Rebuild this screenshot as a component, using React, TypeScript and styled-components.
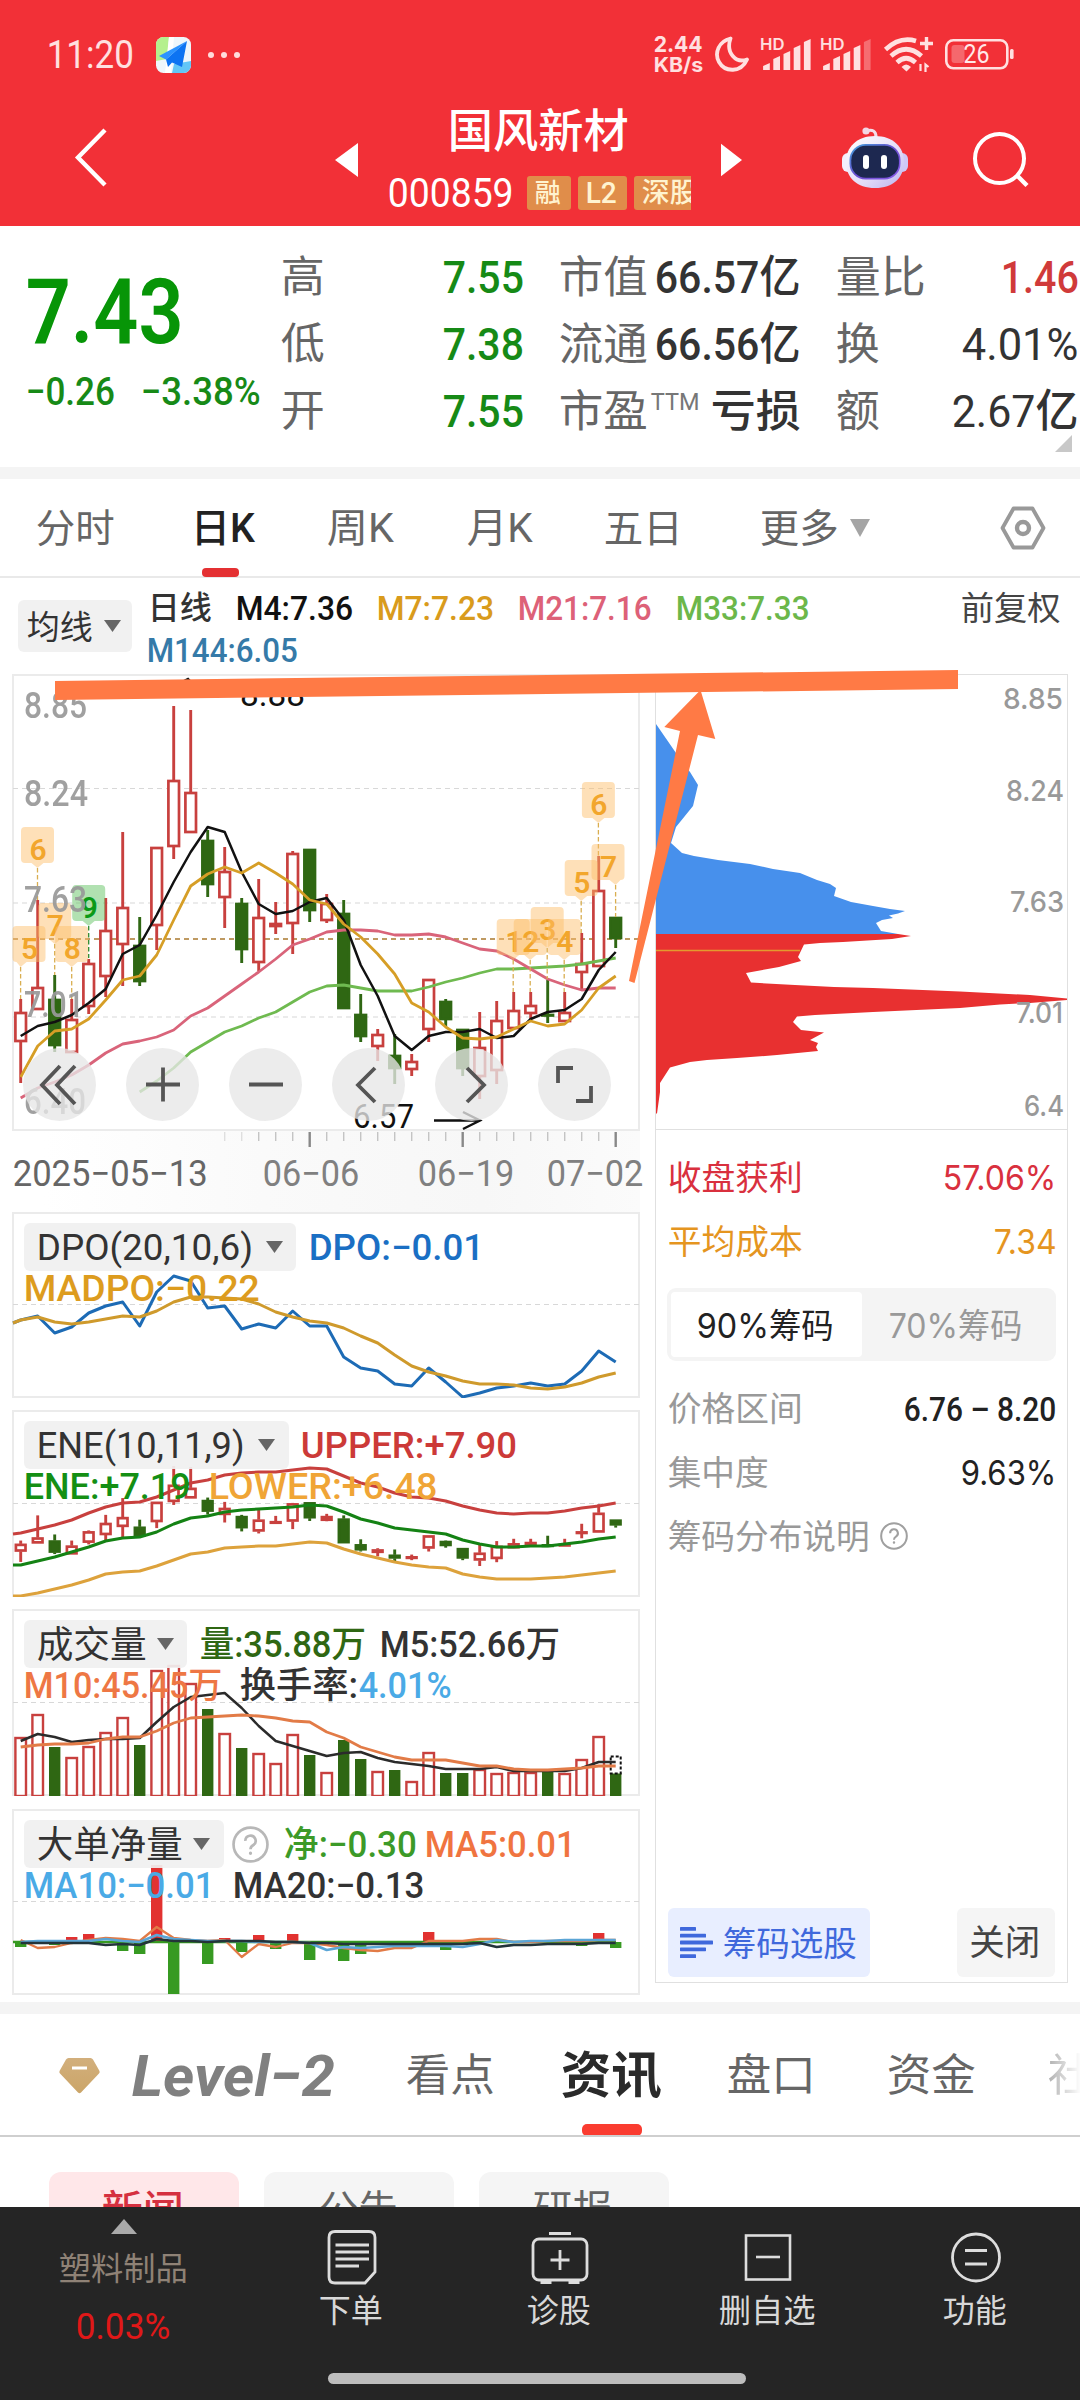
import React, { useLayoutEffect, useRef, useState } from "react";
import styled, { createGlobalStyle } from "styled-components";

const SANS = `Roboto, "Noto Sans CJK SC", sans-serif`;
const ROUND = `Inter, "Noto Sans CJK SC", sans-serif`;

const Global = createGlobalStyle`
  html, body { margin: 0; padding: 0; background: #fff; }
  * { box-sizing: border-box; }
  body { font-family: ${SANS}; width: 1080px; height: 2400px; overflow: hidden; }
  svg { display: block; }
`;

/* ---------- text that condenses to a given width ---------- */

const FitBox = styled.span<{ $w: number; $size: number; $color: string; $weight: number; $round?: boolean; $italic?: boolean }>`
  display: block;
  flex: none;
  width: ${(p) => p.$w}px;
  height: 1em;
  line-height: 1;
  white-space: nowrap;
  font-size: ${(p) => p.$size}px;
  color: ${(p) => p.$color};
  font-weight: ${(p) => p.$weight};
  font-family: ${(p) => (p.$round ? ROUND : SANS)};
  font-style: ${(p) => (p.$italic ? "italic" : "normal")};
`;
const FitInner = styled.span`
  display: inline-block;
  transform-origin: 0 50%;
`;

type FitProps = { w: number; size: number; color?: string; weight?: number; round?: boolean; italic?: boolean; children: string };
function Fit({ w, size, color = "#333", weight = 400, round, italic, children }: FitProps) {
  const ref = useRef<HTMLSpanElement>(null);
  const [k, setK] = useState(1);
  useLayoutEffect(() => {
    if (ref.current) setK(w / ref.current.offsetWidth);
  }, [w, children]);
  return (
    <FitBox $w={w} $size={size} $color={color} $weight={weight} $round={round} $italic={italic}>
      <FitInner ref={ref} style={{ transform: `translate(-1.3px, 1.4px) scaleX(${k})` }}>{children}</FitInner>
    </FitBox>
  );
}

/* ---------- page frame ---------- */

const Page = styled.div`
  width: 1080px;
  height: 2400px;
  display: flex;
  flex-direction: column;
  background: #fff;
  overflow: hidden;
`;
const Divider = styled.div`
  flex: none;
  height: 12px;
  background: #f4f4f4;
`;

/* ---------- header ---------- */

const Header = styled.header`
  flex: none;
  height: 226px;
  background: #f23037;
  display: flex;
  flex-direction: column;
`;
const StatusBar = styled.div`
  height: 104px;
  padding: 5px 66px 0 48px;
  display: flex;
  align-items: center;
  justify-content: space-between;
`;
const StatusLeft = styled.div`
  display: flex;
  align-items: center;
  gap: 21px;
  & > :last-child { margin-left: -4px; }
`;
const StatusRight = styled.div`
  display: flex;
  align-items: center;
`;
const Speed = styled.div`
  display: flex;
  flex-direction: column;
  margin-right: 9px;
  margin-top: -3px;
`;
const NavBar = styled.div`
  height: 122px;
  display: grid;
  grid-template-columns: 335px 53px 303px 51px 338px;
`;
const NavCell = styled.div<{ $top: number; $left?: number; $gap?: number }>`
  display: flex;
  align-items: flex-start;
  padding-top: ${(p) => p.$top}px;
  padding-left: ${(p) => p.$left ?? 0}px;
  gap: ${(p) => p.$gap ?? 0}px;
`;
const TitleBlock = styled.div`
  display: flex;
  flex-direction: column;
  gap: 20px;
  padding-top: 3px;
  overflow: hidden;
`;
const TitleName = styled.div`
  padding-left: 61px;
`;
const CodeRow = styled.div`
  display: flex;
  align-items: center;
  height: 40px;
  gap: 7px;
  overflow: hidden;
  & > :first-child { margin-right: 5px; margin-left: 1px; }
`;
const Tag = styled.span`
  flex: none;
  height: 34px;
  border-radius: 3px;
  background: #e08d4a;
  padding: 0 9px 2px;
  display: flex;
  align-items: center;
`;

/* ---------- quote ---------- */

const Quote = styled.section`
  flex: none;
  height: 241px;
  position: relative;
  display: grid;
  grid-template-columns: 282px 278px 277px 243px;
`;
const PriceBlock = styled.div`
  padding: 40px 0 0 27px;
`;
const ChangeRow = styled.div`
  display: flex;
  gap: 26px;
  margin-top: 15px;
`;
const QuoteCol = styled.div<{ $right: number }>`
  display: flex;
  flex-direction: column;
  padding: 17px ${(p) => p.$right}px 0 0;
`;
const QuoteRow = styled.div`
  height: 67px;
  display: flex;
  align-items: center;
  justify-content: space-between;
`;
const LabelWithSup = styled.span`
  display: flex;
  align-items: flex-start;
  gap: 3px;
`;
const Corner = styled.svg`
  position: absolute;
  right: 8px;
  bottom: 15px;
`;

/* ---------- period tabs ---------- */

const Tabs = styled.nav`
  flex: none;
  height: 99px;
  border-bottom: 2px solid #e9e9e9;
  padding-left: 37px;
  display: flex;
`;
const Tab = styled.div<{ $next: number; $active?: boolean }>`
  position: relative;
  display: flex;
  align-items: center;
  gap: 10px;
  height: 98px;
  margin-right: ${(p) => p.$next}px;
  &::after {
    content: "";
    display: ${(p) => (p.$active ? "block" : "none")};
    position: absolute;
    left: 10px;
    bottom: 0;
    width: 37px;
    height: 9px;
    border-radius: 4px;
    background: #e43032;
  }
`;

/* ---------- chart area ---------- */

const ChartArea = styled.section`
  flex: none;
  height: 1424px;
  position: relative;
`;
const Legend = styled.div`
  height: 96px;
  display: flex;
  padding-left: 18px;
`;
const Chip = styled.div<{ $w: number; $h?: number; $pad?: number; $gap?: number }>`
  flex: none;
  width: ${(p) => p.$w}px;
  height: ${(p) => p.$h ?? 48}px;
  padding-left: ${(p) => p.$pad ?? 14}px;
  display: flex;
  align-items: center;
  gap: ${(p) => p.$gap ?? 12}px;
  border-radius: 6px;
  background: rgba(240, 240, 240, 0.92);
`;
const LegendChip = styled.div`
  padding-top: 22px;
  margin-right: 16px;
`;
const LegendLines = styled.div`
  padding-top: 8px;
  flex: 1;
`;
const LegendLine = styled.div<{ $gap: number; $left?: number }>`
  height: 42px;
  padding-left: ${(p) => p.$left ?? 0}px;
  display: flex;
  align-items: center;
  gap: ${(p) => p.$gap}px;
  & > :last-child:nth-child(6) { margin-left: 127px; }
`;
const Columns = styled.div`
  display: grid;
  grid-template-columns: 628px 413px;
  column-gap: 15px;
  padding-left: 12px;
  align-items: start;
`;
const LeftCol = styled.div`
  display: flex;
  flex-direction: column;
`;
const Panel = styled.div<{ $h: number; $gap?: number }>`
  position: relative;
  height: ${(p) => p.$h}px;
  margin-bottom: ${(p) => p.$gap ?? 0}px;
  border: 2px solid #ebebeb;
`;
const Plot = styled.svg`
  position: absolute;
  left: -2px;
  top: -2px;
`;
const PanelHead = styled.div`
  position: relative;
  padding: 9px 0 0 10px;
`;
const HeadLine = styled.div<{ $gap: number }>`
  display: flex;
  align-items: center;
  gap: ${(p) => p.$gap}px;
`;
const SecondLine = styled(HeadLine)`
  height: 33px;
  padding-left: 1px;
`;
const ValuePair = styled.span`
  display: flex;
  align-items: center;
`;
const ZoomBar = styled.div`
  position: absolute;
  left: 9px;
  bottom: 8px;
  display: flex;
  gap: 30px;
`;
const RoundButton = styled.button`
  width: 73px;
  height: 73px;
  padding: 0;
  border: 0;
  border-radius: 50%;
  background: rgba(231, 231, 231, 0.78);
  display: flex;
  align-items: center;
  justify-content: center;
`;
const TimeAxis = styled.div`
  height: 81px;
  background: linear-gradient(90deg, #fff 5%, #fafafa 40%, #f7f7f7 75%, #fbfbfb);
`;
const TimeLabels = styled.div`
  display: flex;
  padding: 7px 0 0 2px;
  & > :nth-child(1) { margin-right: 55px; }
  & > :nth-child(2) { margin-right: 58px; }
  & > :nth-child(3) { margin-right: 32px; }
`;

const RightPanel = styled.aside`
  height: 1309px;
  border: 1px solid #e0e0e0;
  display: flex;
  flex-direction: column;
`;
const ProfileBox = styled.div`
  height: 456px;
  margin: -1px 0 0 -1px;
  border-bottom: 1px solid #e0e0e0;
`;
const StatRow = styled.div<{ $gap?: number }>`
  height: 64px;
  padding: 0 9px 0 13px;
  display: flex;
  align-items: center;
  justify-content: ${(p) => (p.$gap ? "flex-start" : "space-between")};
  gap: ${(p) => p.$gap ?? 0}px;
`;
const Stats = styled.div`
  padding-top: 15px;
`;
const Segment = styled.div`
  margin: 15px 11px 15px;
  height: 73px;
  border-radius: 9px;
  background: #f4f4f4;
  padding: 4px;
  display: flex;
`;
const SegItem = styled.div<{ $on?: boolean }>`
  flex: 1;
  border-radius: 4px;
  background: ${(p) => (p.$on ? "#fff" : "transparent")};
  display: flex;
  align-items: center;
  justify-content: center;
`;
const PanelFoot = styled.div`
  margin-top: auto;
  padding: 0 12px 5px;
  display: flex;
  justify-content: space-between;
`;
const FootButton = styled.div<{ $blue?: boolean; $w: number }>`
  width: ${(p) => p.$w}px;
  height: 69px;
  border-radius: 6px;
  background: ${(p) => (p.$blue ? "#e8eeff" : "#f5f5f5")};
  display: flex;
  align-items: center;
  justify-content: center;
  gap: 11px;
`;
const Annotation = styled.svg`
  position: absolute;
  left: 0;
  top: 0;
  pointer-events: none;
`;

/* ---------- news ---------- */

const NewsTabs = styled.nav`
  flex: none;
  height: 123px;
  border-bottom: 2px solid #cfcfcf;
  padding-left: 59px;
  display: flex;
  overflow: hidden;
`;
const NewsTab = styled.div<{ $next: number; $active?: boolean; $fade?: boolean }>`
  position: relative;
  height: 122px;
  flex: none;
  display: flex;
  align-items: center;
  margin-right: ${(p) => p.$next}px;
  ${(p) => (p.$fade ? "-webkit-mask-image: linear-gradient(90deg, rgba(0,0,0,.5), transparent 32px);" : "")}
  &::after {
    content: "";
    display: ${(p) => (p.$active ? "block" : "none")};
    position: absolute;
    left: 20px;
    bottom: 0;
    width: 60px;
    height: 12px;
    border-radius: 5px;
    background: #fa3c30;
  }
`;
const NewsChips = styled.div`
  flex: 1;
  min-height: 0;
  overflow: hidden;
  display: flex;
  gap: 25px;
  padding: 35px 0 0 49px;
`;
const NewsChip = styled.div<{ $on?: boolean }>`
  flex: none;
  width: 190px;
  height: 78px;
  border-radius: 12px;
  background: ${(p) => (p.$on ? "#ffe7e9" : "#f5f5f5")};
  display: flex;
  justify-content: center;
  padding-top: 18px;
`;

/* ---------- bottom bar ---------- */

const BottomBar = styled.footer`
  flex: none;
  height: 193px;
  background: #252525;
  display: flex;
  flex-direction: column;
`;
const BottomItems = styled.div`
  display: grid;
  grid-template-columns: 248px repeat(4, 208px);
  height: 166px;
`;
const BottomItem = styled.div`
  display: flex;
  flex-direction: column;
  align-items: center;
  padding-top: 21px;
  gap: 8px;
`;
const Sector = styled.div`
  display: flex;
  flex-direction: column;
  align-items: center;
  padding-top: 12px;
  & > :nth-child(2) { margin-top: 18px; }
  & > :nth-child(3) { margin-top: 24px; }
`;
const HomeBar = styled.div`
  width: 418px;
  height: 11px;
  margin-left: 328px;
  border-radius: 6px;
  background: #bdbdbd;
`;

/* ---------- data ---------- */

const RED = "#c8403e";
const GREEN = "#2f6713";
const X = (i: number) => 20.7 + 17 * i;
const series = (v: number[], start = 0, lead?: number) =>
  (lead !== undefined ? `13,${lead} ` : "") + v.map((y, i) => `${X(i + start).toFixed(1)},${y}`).join(" ");

type Candle = [string, number, number, number, number];
const candles: Candle[] = [
  ["r", 999, 1012, 1042, 1083], ["r", 900, 987, 1010, 1010], ["g", 975, 999, 1046, 1052], ["r", 999, 1019, 1053, 1053],
  ["r", 959, 963, 1007, 1014], ["r", 898, 930, 977, 997], ["r", 832, 907, 945, 986], ["g", 917, 945, 982, 986],
  ["r", 847, 847, 926, 950], ["r", 706, 780, 847, 859], ["r", 710, 792, 833, 833], ["g", 830, 840, 885, 897],
  ["r", 847, 871, 898, 928], ["g", 898, 903, 950, 963], ["r", 879, 917, 963, 971], ["r", 902, 923, 927, 934],
  ["r", 851, 853, 924, 954], ["g", 849, 849, 911, 922], ["r", 894, 903, 921, 923], ["g", 900, 913, 1009, 1009],
  ["g", 994, 1014, 1037, 1042], ["r", 1029, 1034, 1047, 1061], ["g", 1034, 1055, 1069, 1084], ["r", 1054, 1061, 1070, 1076],
  ["r", 979, 979, 1030, 1042], ["g", 999, 1001, 1020, 1027], ["g", 1029, 1029, 1069, 1076], ["r", 1012, 1047, 1077, 1099],
  ["r", 1001, 1020, 1071, 1084], ["r", 992, 1010, 1029, 1029], ["r", 992, 1005, 1014, 1022], ["g", 980, 1014, 1016, 1023],
  ["r", 992, 1012, 1022, 1022], ["r", 933, 963, 973, 990], ["r", 856, 890, 967, 967], ["g", 917, 917, 939, 948],
];
const ma4 = [1036, 1026, 1022, 1015, 1003, 989, 954, 945, 915, 882, 852, 827, 832, 872, 904, 914, 911, 902, 898, 920, 965, 996, 1036, 1050, 1036, 1032, 1032, 1029, 1038, 1036, 1019, 1012, 1010, 999, 970, 952];
const ma7 = [1077, 1046, 1031, 1029, 1019, 1000, 980, 976, 955, 920, 886, 874, 867, 873, 863, 873, 884, 900, 904, 924, 937, 954, 974, 1003, 1012, 1027, 1038, 1039, 1037, 1029, 1021, 1026, 1024, 1010, 988, 976];
const ma21 = [1098, 1088, 1082, 1075, 1065, 1053, 1044, 1041, 1037, 1030, 1016, 1008, 996, 984, 972, 959, 945, 939, 932, 930, 930, 931, 935, 935, 934, 937, 943, 949, 951, 959, 969, 979, 985, 990, 988, 988];
const ma33 = [1092, 1081, 1068, 1052, 1042, 1032, 1026, 1018, 1012, 1002, 992, 986, 985, 988, 991, 991, 991, 987, 982, 978, 973, 969, 969, 968, 967, 966, 964, 961, 958];
const dpo = [1320, 1316, 1333, 1327, 1313, 1306, 1302, 1326, 1292, 1276, 1281, 1308, 1306, 1329, 1324, 1328, 1311, 1326, 1326, 1357, 1368, 1371, 1384, 1386, 1368, 1382, 1397, 1393, 1388, 1386, 1383, 1386, 1384, 1371, 1351, 1362];
const madpo = [1320, 1317, 1322, 1324, 1322, 1319, 1316, 1317, 1311, 1302, 1297, 1297, 1298, 1299, 1304, 1312, 1317, 1321, 1323, 1328, 1336, 1343, 1355, 1366, 1372, 1376, 1381, 1384, 1384, 1385, 1388, 1389, 1387, 1383, 1377, 1373];
const upper = [1533, 1529, 1525, 1520, 1513, 1507, 1503, 1502, 1497, 1490, 1483, 1480, 1475, 1473, 1472, 1472, 1470, 1468, 1469, 1476, 1483, 1487, 1493, 1497, 1498, 1501, 1506, 1510, 1513, 1514, 1513, 1513, 1511, 1508, 1506, 1503];
const ene = [1565, 1561, 1557, 1552, 1547, 1541, 1538, 1537, 1532, 1524, 1518, 1516, 1512, 1510, 1509, 1508, 1507, 1505, 1506, 1512, 1519, 1523, 1528, 1530, 1532, 1534, 1540, 1544, 1547, 1547, 1546, 1546, 1544, 1542, 1539, 1537];
const lower = [1596, 1593, 1589, 1585, 1580, 1574, 1572, 1571, 1566, 1560, 1554, 1552, 1548, 1547, 1546, 1546, 1544, 1542, 1543, 1549, 1554, 1558, 1562, 1565, 1567, 1568, 1574, 1577, 1579, 1579, 1579, 1578, 1577, 1575, 1573, 1571];
const volume: [string, number][] = [
  ["r", 1737], ["r", 1714], ["g", 1747], ["r", 1757], ["r", 1746], ["r", 1732], ["r", 1717], ["g", 1745], ["r", 1670], ["r", 1665], ["r", 1683], ["g", 1709],
  ["r", 1733], ["g", 1748], ["r", 1753], ["r", 1763], ["r", 1734], ["g", 1755], ["r", 1772], ["g", 1740], ["g", 1759], ["r", 1771], ["g", 1770], ["r", 1781],
  ["r", 1752], ["g", 1773], ["g", 1773], ["r", 1769], ["r", 1773], ["r", 1772], ["r", 1772], ["g", 1771], ["r", 1773], ["r", 1759], ["r", 1736], ["g", 1773],
];
const vm5 = [1741, 1734, 1737, 1742, 1740, 1739, 1739, 1738, 1722, 1707, 1697, 1695, 1693, 1708, 1726, 1741, 1746, 1751, 1756, 1753, 1752, 1758, 1762, 1764, 1766, 1769, 1769, 1769, 1767, 1771, 1771, 1771, 1771, 1768, 1762, 1762];
const vm10 = [1747, 1745, 1744, 1744, 1743, 1739, 1737, 1737, 1731, 1723, 1718, 1717, 1716, 1715, 1716, 1718, 1721, 1722, 1732, 1738, 1747, 1752, 1757, 1760, 1760, 1760, 1763, 1766, 1766, 1769, 1770, 1770, 1769, 1768, 1766, 1766];
const netBars: [number, number][] = [
  [0, 1947], [2, 1945], [3, 1937], [4, 1934], [6, 1951], [7, 1954], [8, 1865], [9, 1994], [11, 1964], [12, 1938], [13, 1952], [14, 1935], [15, 1949], [16, 1934],
  [17, 1960], [19, 1961], [20, 1954], [24, 1932], [25, 1950], [33, 1946], [34, 1933], [35, 1948],
];
const net5 = [1940, 1948, 1947, 1943, 1940, 1938, 1939, 1941, 1927, 1938, 1940, 1941, 1940, 1957, 1944, 1947, 1943, 1943, 1945, 1948, 1950, 1951, 1948, 1948, 1941, 1941, 1941, 1939, 1939, 1942, 1942, 1941, 1941, 1941, 1940, 1940];
const net10 = [1942, 1941, 1941, 1941, 1941, 1939, 1941, 1942, 1935, 1939, 1940, 1941, 1941, 1941, 1942, 1942, 1942, 1943, 1950, 1947, 1948, 1947, 1946, 1946, 1946, 1946, 1947, 1944, 1940, 1942, 1941, 1941, 1940, 1940, 1940, 1940];
const net20 = [1943, 1943, 1943, 1943, 1943, 1945, 1944, 1945, 1939, 1941, 1941, 1942, 1941, 1941, 1941, 1942, 1942, 1943, 1943, 1944, 1944, 1944, 1944, 1944, 1944, 1944, 1944, 1943, 1947, 1945, 1945, 1944, 1944, 1944, 1943, 1943];

const profileTop = "656,724 676,753 690,772 698,785 693,806 676,827 671,843 682,853 694,856 718,860 750,864 773,869 800,873 817,880 830,884 836,888 834,896 851,902 873,906 890,909 905,911 898,913.5 889,915.5 893,918 882,920 876,923 881,931 898,934 656,934";
const profileBottom = "656,934 898,934 911,936 892,939 843,942 820,943 804,944.5 798,957 801,961 779,967 746,973 751,982.5 795,985 834,987 873,988 960,991.5 1030,995 1067,998.5 1067,1000 1030,1003 1000,1004.5 960,1008 873,1012 815,1015 797,1016.5 793,1022 801,1030 824,1032.5 810,1040 818,1043 816,1047 818,1051 777,1055 737,1058 707,1060 690,1062 670,1067.6 660,1083 660,1092 657,1113.5 656,1113.5";

type Badge = { x: number; bx?: number; top: number; to: number; n: string; green?: boolean };
const badges: Badge[] = [
  { x: 20.6, bx: 29, top: 926, to: 999, n: "5" }, { x: 37.5, top: 827, to: 900, n: "6" }, { x: 54.7, top: 903, to: 975, n: "7" }, { x: 71.7, top: 926, to: 999, n: "8" },
  { x: 88.7, top: 885, to: 958, n: "9", green: true },
  { x: 513.2, top: 919, to: 992, n: "1" }, { x: 530.2, top: 919, to: 992, n: "2" }, { x: 547.2, top: 907, to: 979, n: "3" }, { x: 564.2, top: 919, to: 992, n: "4" },
  { x: 581.2, top: 860, to: 933, n: "5" }, { x: 598.4, top: 782, to: 856, n: "6" }, { x: 615.6, bx: 608, top: 844, to: 917, n: "7" },
];

/* ---------- drawings ---------- */

type Spec = { c: Candle; i: number; map?: (v: number) => number; w?: number };
function CandleMark({ c, i, map = (v) => v, w = 10.6 }: Spec) {
  const [k, h, t, b, l] = c;
  const col = k === "r" ? RED : GREEN;
  const x = X(i);
  const top = map(t), bot = map(b);
  return (
    <g stroke={col} strokeWidth={2.9} fill={k === "r" ? "#fff" : GREEN}>
      <line x1={x} x2={x} y1={map(h)} y2={top} />
      <line x1={x} x2={x} y1={bot} y2={map(l)} />
      <rect x={x - w / 2} y={top + 1} width={w} height={Math.max(bot - top - 2, 0.5)} strokeWidth={2.7} />
    </g>
  );
}

const Line = ({ pts, c, w = 2.8 }: { pts: string; c: string; w?: number }) => (
  <polyline points={pts} fill="none" stroke={c} strokeWidth={w} strokeLinejoin="round" />
);
const Dash = ({ y, c = "#d8d8d8", w = 1.2 }: { y: number; c?: string; w?: number }) => (
  <line x1={13} x2={640} y1={y} y2={y} stroke={c} strokeWidth={w} strokeDasharray="5 4" />
);
const AxisText = ({ x, y, w, size, children, fill = "#999", weight = 500 }: { x: number; y: number; w: number; size: number; children: string; fill?: string; weight?: number }) => (
  <text x={x} y={y} textLength={w} lengthAdjust="spacingAndGlyphs" fontSize={size} fill={fill} fontWeight={weight} fontFamily={SANS}>{children}</text>
);

function BadgeMark({ b }: { b: Badge }) {
  const cx = b.bx ?? b.x;
  const t = b.top;
  const col = b.green ? "#0c9a18" : "#f2a62c";
  const px = b.x;
  const l = cx - 16.5, r = cx + 16.5;
  return (
    <g>
      <line x1={px} x2={px} y1={t + 41} y2={b.to} stroke={b.green ? "#2f8a2f" : "#d9ae50"} strokeWidth={1.3} strokeDasharray="4.5 2.5" />
      <path
        d={`M${l + 4},${t} H${r - 4} Q${r},${t} ${r},${t + 4} V${t + 32} Q${r},${t + 36} ${r - 4},${t + 36} H${Math.min(px + 6, r - 4)} L${px},${t + 41} L${Math.max(px - 6, l + 4)},${t + 36} H${l + 4} Q${l},${t + 36} ${l},${t + 32} V${t + 4} Q${l},${t} ${l + 4},${t} Z`}
        fill={b.green ? "rgba(100,195,100,.5)" : "rgba(252,190,104,.47)"}
      />
      <text x={cx + 0.5} y={t + 32.5} textAnchor="middle" fontSize={30} fontWeight={600} fill={col} fontFamily={SANS}>{b.n}</text>
    </g>
  );
}

const MainPlot = () => (
  <Plot width={628} height={457} viewBox="12 674 628 457">
    <Dash y={788.5} /><Dash y={903} /><Dash y={1017} />
    <Dash y={939} c="#bf9a62" w={1.8} />
    {candles.map((c, i) => <CandleMark key={i} c={c} i={i} />)}
    <Line pts={series(ma33, 7)} c="#6fba50" />
    <Line pts={series(ma21)} c="#d9647a" />
    <Line pts={series(ma4)} c="#111" w={2.5} />
    <Line pts={series(ma7)} c="#d69e26" />
    {badges.map((b, i) => <BadgeMark key={i} b={b} />)}
    <g opacity={0.93}>
      <AxisText x={24} y={718} w={63} size={36}>8.85</AxisText>
      <AxisText x={24} y={806} w={64} size={36}>8.24</AxisText>
      <AxisText x={24} y={912} w={63} size={36}>7.63</AxisText>
      <AxisText x={24} y={1017} w={60} size={36}>7.01</AxisText>
      <AxisText x={24} y={1114} w={62} size={36}>6.40</AxisText>
    </g>
    <AxisText x={240} y={706} w={65} size={34} fill="#111" weight={400}>8.88</AxisText>
    <path d="M184,681 L188,679 L191,682" stroke="#111" strokeWidth={2.4} fill="none" />
    <AxisText x={353} y={1128} w={61} size={33} fill="#111" weight={400}>6.57</AxisText>
    <path d="M434,1120.5 H479 M463,1112 L480,1120.5 L463,1129" stroke="#111" strokeWidth={2.4} fill="none" />
  </Plot>
);

const DpoPlot = () => (
  <Plot width={628} height={186} viewBox="12 1212 628 186">
    <Dash y={1304.5} />
    <Line pts={series(dpo, 0, 1323)} c="#1d6bb5" w={3} />
    <Line pts={series(madpo, 0, 1323)} c="#cf9a2c" w={3} />
  </Plot>
);
const EnePlot = () => (
  <Plot width={628} height={187} viewBox="12 1410 628 187">
    <Dash y={1503.5} />
    {candles.map((c, i) => <CandleMark key={i} c={c} i={i} map={(v) => 1466 + (v - 706) * 0.2545} w={9.6} />)}
    <Line pts={series(upper, 0, 1534)} c="#c8403e" w={3} />
    <Line pts={series(ene, 0, 1565)} c="#148214" w={3} />
    <Line pts={series(lower, 0, 1596)} c="#dda23c" w={3} />
  </Plot>
);
const VolPlot = () => (
  <Plot width={628} height={187} viewBox="12 1609 628 187">
    <Dash y={1702.5} />
    {volume.map(([k, t], i) =>
      k === "r" ? (
        <rect key={i} x={X(i) - 5.3} y={t + 1} width={10.6} height={1795 - t} fill="#fff" stroke={RED} strokeWidth={2.4} />
      ) : (
        <rect key={i} x={X(i) - 5.7} y={t} width={11.4} height={1796 - t} fill={GREEN} />
      )
    )}
    <rect x={610.7} y={1756.5} width={10} height={17} fill="#fff" stroke="#111" strokeWidth={2} strokeDasharray="3 2" />
    <Line pts={series(vm5)} c="#2b2b2b" w={2.5} />
    <Line pts={series(vm10)} c="#e27b47" />
  </Plot>
);
const NetPlot = () => (
  <Plot width={628} height={186} viewBox="12 1809 628 186">
    <Dash y={1901.5} />
    {netBars.map(([i, y]) => (
      <rect key={i} x={X(i) - 5.7} y={Math.min(y, 1942)} width={11.4} height={Math.abs(y - 1942)} fill={y < 1942 ? "#e23230" : "#379a22"} />
    ))}
    <line x1={13} x2={616} y1={1942} y2={1942} stroke="#379a22" strokeWidth={2.5} />
    <Line pts={series(net5)} c="#e27b47" w={2.3} />
    <Line pts={series(net10)} c="#5aa5d6" w={2.7} />
    <Line pts={series(net20)} c="#23343a" w={2.7} />
  </Plot>
);
const Profile = () => (
  <svg width={413} height={456} viewBox="655 674 413 456">
    <polygon points={profileTop} fill="#4790ec" />
    <polygon points={profileBottom} fill="#e83030" />
    <line x1={656} x2={800} y1={950.5} y2={950.5} stroke="#e39a2e" strokeWidth={1.6} />
    {[["8.85", 1003, 709, 60], ["8.24", 1006, 801, 58], ["7.63", 1010, 912, 54], ["7.01", 1016, 1023, 47], ["6.4", 1024, 1116, 40]].map(([s, x, y, w]) => (
      <text key={s} x={x} y={y} textLength={w as number} lengthAdjust="spacingAndGlyphs" fontSize={29} fontWeight={500} fill="#999" fontFamily={ROUND}>{s}</text>
    ))}
  </svg>
);
const Ticks = () => (
  <svg width={628} height={17} viewBox="12 1131 628 17">
    {Array.from({ length: 24 }, (_, k) => k + 12).map((i) => {
      const big = i === 17 || i === 26 || i === 35;
      return <line key={i} x1={X(i)} x2={X(i)} y1={1132} y2={big ? 1147 : 1141} stroke={big ? "#888" : "#c4c4c4"} strokeWidth={big ? 2.4 : 1.4} opacity={i < 14 ? 0.5 : 1} />;
    })}
  </svg>
);

const Caret = ({ w = 17, h = 12, c = "#666" }: { w?: number; h?: number; c?: string }) => (
  <svg width={w} height={h} viewBox="0 0 16 12" preserveAspectRatio="none"><path d="M0,0 H16 L8,12 Z" fill={c} /></svg>
);
const Help = ({ s, c = "#aaa" }: { s: number; c?: string }) => (
  <svg width={s} height={s} viewBox="0 0 36 36" fill="none" stroke={c} strokeWidth={2.6}>
    <circle cx="18" cy="18" r="16.5" />
    <path d="M13,14.5 a5,5 0 1 1 7.5,4.2 q-2.5,1.5 -2.5,4" />
    <circle cx="18" cy="26.5" r="0.8" fill={c} strokeWidth={1.6} />
  </svg>
);

const AppIcon = () => (
  <svg width={35} height={36} viewBox="0 0 35 36">
    <defs><clipPath id="app"><rect width="35" height="36" rx="7.5" /></clipPath></defs>
    <g clipPath="url(#app)">
      <rect width="35" height="36" fill="#eef6fb" />
      <path d="M0,0 H13 L11,22 L0,24 Z" fill="#b5f08d" />
      <path d="M13,0 H18 L15,36 H9 Z" fill="#fff" />
      <path d="M18,27 L35,24 V36 H16 Z" fill="#62c6f7" />
      <path d="M31,4 L3,19 L10,22.5 Z" fill="#2b93ff" />
      <path d="M31,4 L10,22.5 L12,30 L16,25.5 L26,30 Z" fill="#0c73f2" />
    </g>
  </svg>
);
const Dots = () => (
  <svg width={32} height={6} viewBox="0 0 32 6" fill="#ffdcdc"><circle cx="3" cy="3" r="3" /><circle cx="16" cy="3" r="3" /><circle cx="29" cy="3" r="3" /></svg>
);
const StatusIcons = () => (
  <svg width={300} height={38} viewBox="714 36 300 38">
    <path d="M730.5,38.5 C719,41 714,53 719,62 C725,72.5 741,73 747,59.5 C736,63.5 725.5,53 730.5,38.5 Z" fill="none" stroke="#ffe0e0" strokeWidth={3.8} strokeLinejoin="round" />
    {[761, 821].map((x, n) => (
      <g key={x}>
        <text x={x - 1} y={50} fontSize={15.5} fontWeight={600} textLength={24.5} lengthAdjust="spacingAndGlyphs" fill="#ffe0e0" fontFamily={ROUND}>HD</text>
        {[6, 13, 18, 24, 30].map((h, i) => (
          <path key={h} d={`M${x + 2.1 + i * 10.2},70 V${70 - h + 2} L${x + 8.8 + i * 10.2},${70 - h - 1} V70 Z`} fill="#ffe0e0" opacity={n === 1 && i === 4 ? 0.35 : 1} />
        ))}
      </g>
    ))}
    <g fill="none" stroke="#ffe0e0" strokeWidth={4.6}>
      <path d="M885.5,49.5 Q900,36 916,41" />
      <path d="M891,56 Q906,42.5 921.5,56" />
      <path d="M897,62.5 Q906,54 915.5,62.5" />
      <path d="M926.5,37 V50 M920,43.5 H933" strokeWidth={3.4} />
      <path d="M920.5,64 V71 M925.5,72 V64.5 L928.5,67" strokeWidth={2.2} />
    </g>
    <path d="M901.5,67 Q906,62 911,67 L906.5,71.5 Z" fill="#ffe0e0" />
    <rect x={946.3} y={40.3} width={61} height={28} rx={7} fill="none" stroke="#ffe0e0" strokeWidth={2.6} />
    <rect x={951.5} y={45} width={13} height={18} rx={3} fill="#fff" opacity={0.27} />
    <rect x={1010} y={49} width={3.6} height={10} rx={1.5} fill="#ffe0e0" />
    <text x={963.5} y={63} fontSize={25} textLength={26} lengthAdjust="spacingAndGlyphs" fill="#ffe8e8" fontFamily={SANS}>26</text>
  </svg>
);
const Robot = () => (
  <svg width={67} height={62} viewBox="842 127 67 62">
    <defs>
      <linearGradient id="head" x1="0" y1="0" x2="1" y2="1"><stop offset="0" stopColor="#fff" /><stop offset=".6" stopColor="#e3dcf8" /><stop offset="1" stopColor="#b9b3ee" /></linearGradient>
      <linearGradient id="visor" x1="0" y1="0" x2="1" y2="1"><stop offset="0" stopColor="#3fa4dc" /><stop offset=".5" stopColor="#6c4fd0" /><stop offset="1" stopColor="#8a5bea" /></linearGradient>
    </defs>
    <path d="M866,131 Q876,128 876,137" fill="none" stroke="#f3dde9" strokeWidth={3} />
    <circle cx="866" cy="131" r="3.6" fill="#f3d6e4" />
    <rect x={842} y={153} width={12} height={19} rx={6} fill="#f3effd" />
    <rect x={896} y={153} width={12} height={19} rx={6} fill="#cfc7f6" />
    <path d="M875,136 C893,136 904,147 904,162 C904,178 893,188 875,188 C857,188 846,178 846,162 C846,147 857,136 875,136 Z" fill="url(#head)" />
    <rect x={849.5} y={144} width={51} height={35.5} rx={16} fill="url(#visor)" />
    <rect x={851.3} y={145.8} width={47.6} height={32} rx={14.5} fill="#1d2850" />
    <rect x={863} y={155} width={6} height={14} rx={3} fill="#fff" />
    <rect x={881} y={155} width={6} height={14} rx={3} fill="#fff" />
  </svg>
);

/* ---------- app ---------- */

export default function App() {
  return (
    <>
      <Global />
      <Page>
        <Header>
          <StatusBar>
            <StatusLeft>
              <Fit w={87} size={39} color="#ffe0e0">11:20</Fit>
              <AppIcon />
              <Dots />
            </StatusLeft>
            <StatusRight>
              <Speed>
                <Fit w={49} size={22} weight={700} color="#ffe0e0" round>2.44</Fit>
                <Fit w={50} size={20} weight={700} color="#ffe0e0" round>KB/s</Fit>
              </Speed>
              <StatusIcons />
            </StatusRight>
          </StatusBar>
          <NavBar>
            <NavCell $top={22} $left={74}>
              <svg width={35} height={64} viewBox="0 0 35 64"><path d="M31,4 L4,31.5 L31,59" fill="none" stroke="#fff" strokeWidth={4.4} /></svg>
            </NavCell>
            <NavCell $top={39}>
              <svg width={23} height={34} viewBox="0 0 23 34"><path d="M23,0 V34 L0,17 Z" fill="#fff" /></svg>
            </NavCell>
            <TitleBlock>
              <TitleName><Fit w={181} size={46} weight={500} color="#fff">国风新材</Fit></TitleName>
              <CodeRow>
                <Fit w={126} size={40} color="#fff">000859</Fit>
                <Tag><Fit w={26} size={26} color="#fff3d0" weight={500}>融</Fit></Tag>
                <Tag><Fit w={31} size={29} color="#fff3d0" weight={500}>L2</Fit></Tag>
                <Tag><Fit w={56} size={27} color="#fff3d0" weight={500}>深股</Fit></Tag>
              </CodeRow>
            </TitleBlock>
            <NavCell $top={39} $left={30}>
              <svg width={22} height={34} viewBox="0 0 22 34"><path d="M0,0 V34 L22,17 Z" fill="#fff" /></svg>
            </NavCell>
            <NavCell $top={23} $left={100} $gap={63}>
              <Robot />
              <svg width={58} height={62} viewBox="972 127 58 62" fill="none" stroke="#fff" strokeWidth={4}><circle cx="999.5" cy="158.500" r="24.500" /><path d="M1017,175.500 L1027,185.500" strokeWidth={4.4} /></svg>
            </NavCell>
          </NavBar>
        </Header>

        <Quote>
          <PriceBlock>
            <Fit w={158} size={91} weight={600} color="#079507">7.43</Fit>
            <ChangeRow>
              <Fit w={89} size={39} weight={500} color="#178a17">−0.26</Fit>
              <Fit w={120} size={39} weight={500} color="#178a17">−3.38%</Fit>
            </ChangeRow>
          </PriceBlock>
          <QuoteCol $right={35}>
            {[["高", "7.55"], ["低", "7.38"], ["开", "7.55"]].map(([a, b]) => (
              <QuoteRow key={a}><Fit w={44} size={43} color="#666">{a}</Fit><Fit w={81} size={45} weight={500} color="#168a16">{b}</Fit></QuoteRow>
            ))}
          </QuoteCol>
          <QuoteCol $right={35}>
            <QuoteRow><Fit w={89} size={44} color="#666">市值</Fit><Fit w={146} size={45} weight={500}>66.57亿</Fit></QuoteRow>
            <QuoteRow><Fit w={89} size={44} color="#666">流通</Fit><Fit w={146} size={45} weight={500}>66.56亿</Fit></QuoteRow>
            <QuoteRow>
              <LabelWithSup><Fit w={89} size={44} color="#666">市盈</Fit><Fit w={49} size={24} color="#777">TTM</Fit></LabelWithSup>
              <Fit w={90} size={44} weight={500}>亏损</Fit>
            </QuoteRow>
          </QuoteCol>
          <QuoteCol $right={0}>
            <QuoteRow><Fit w={90} size={44} color="#666">量比</Fit><Fit w={78} size={45} weight={500} color="#d03a3a">1.46</Fit></QuoteRow>
            <QuoteRow><Fit w={44} size={44} color="#666">换</Fit><Fit w={117} size={45} weight={450}>4.01%</Fit></QuoteRow>
            <QuoteRow><Fit w={44} size={44} color="#666">额</Fit><Fit w={127} size={45} weight={450}>2.67亿</Fit></QuoteRow>
          </QuoteCol>
          <Corner width={17} height={17} viewBox="0 0 17 17"><path d="M17,0 V17 H0 Z" fill="#c8c8c8" /></Corner>
        </Quote>

        <Divider />

        <Tabs>
          <Tab $next={76}><Fit w={79} size={39} color="#666">分时</Fit></Tab>
          <Tab $next={72} $active><Fit w={64} size={40} weight={500} color="#222">日K</Fit></Tab>
          <Tab $next={73}><Fit w={67} size={40} color="#666">周K</Fit></Tab>
          <Tab $next={71}><Fit w={66} size={40} color="#666">月K</Fit></Tab>
          <Tab $next={77}><Fit w={79} size={39} color="#666">五日</Fit></Tab>
          <Tab $next={130}><Fit w={79} size={39} color="#666">更多</Fit><Caret w={20} h={18} c="#a5a5a5" /></Tab>
          <Tab $next={0}>
            <svg width={46} height={44} viewBox="0 0 46 44" fill="none" stroke="#999"><path d="M13.5,2.5 H32.5 L43.5,22 L32.5,41.5 H13.5 L2.5,22 Z" strokeWidth={3.800} strokeLinejoin="round" /><circle cx="23" cy="22" r="6" strokeWidth={4.400} /></svg>
          </Tab>
        </Tabs>

        <ChartArea>
          <Legend>
            <LegendChip>
              <Chip $w={114} $h={52} $pad={10} $gap={10}><Fit w={66} size={33}>均线</Fit><Caret /></Chip>
            </LegendChip>
            <LegendLines>
              <LegendLine $gap={24} $left={1}>
                <Fit w={64} size={32} weight={500}>日线</Fit>
                <Fit w={117} size={34} weight={500} color="#111">M4:7.36</Fit>
                <Fit w={117} size={34} weight={500} color="#d99b1c">M7:7.23</Fit>
                <Fit w={134} size={34} weight={500} color="#dd6178">M21:7.16</Fit>
                <Fit w={134} size={34} weight={500} color="#6cb74a">M33:7.33</Fit>
                <Fit w={100} size={33} color="#444">前复权</Fit>
              </LegendLine>
              <LegendLine $gap={0} $left={-1}><Fit w={151} size={34} weight={500} color="#357aa8">M144:6.05</Fit></LegendLine>
            </LegendLines>
          </Legend>

          <Columns>
            <LeftCol>
              <Panel $h={457}>
                <MainPlot />
                <ZoomBar>
                  {[
                    "M37,18 L19,37 L37,56 M52,18 L34,37 L52,56",
                    "M20,36.5 H54 M37,19.5 V53.5",
                    "M20,36.5 H54",
                    "M43,20 L26,37 L43,54",
                    "M32,20 L49,37 L32,54",
                    "M20,35 V20 H35 M38,53 H53 V38",
                  ].map((d) => (
                    <RoundButton key={d}><svg width={73} height={73} fill="none" stroke="#555" strokeWidth={3.8}><path d={d} /></svg></RoundButton>
                  ))}
                </ZoomBar>
              </Panel>
              <TimeAxis>
                <Ticks />
                <TimeLabels>
                  <Fit w={195} size={36} weight={450} color="#666">2025−05−13</Fit>
                  <Fit w={97} size={36} weight={450} color="#808080">06−06</Fit>
                  <Fit w={97} size={36} weight={450} color="#808080">06−19</Fit>
                  <Fit w={97} size={36} weight={450} color="#808080">07−02</Fit>
                </TimeLabels>
              </TimeAxis>

              <Panel $h={186} $gap={12}>
                <DpoPlot />
                <PanelHead>
                  <HeadLine $gap={14}><Chip $w={272}><Fit w={216} size={36} weight={450}>DPO(20,10,6)</Fit><Caret /></Chip><Fit w={175} size={36} weight={500} color="#1a6fc4">DPO:−0.01</Fit></HeadLine>
                  <SecondLine $gap={20}><Fit w={236} size={36} weight={500} color="#dd9c1e">MADPO:−0.22</Fit></SecondLine>
                </PanelHead>
              </Panel>

              <Panel $h={187} $gap={12}>
                <EnePlot />
                <PanelHead>
                  <HeadLine $gap={13}><Chip $w={265}><Fit w={208} size={36} weight={450}>ENE(10,11,9)</Fit><Caret /></Chip><Fit w={216} size={36} weight={500} color="#cc3a38">UPPER:+7.90</Fit></HeadLine>
                  <SecondLine $gap={18}><Fit w={167} size={36} weight={500} color="#148f14">ENE:+7.19</Fit><Fit w={229} size={36} weight={500} color="#f0a536">LOWER:+6.48</Fit></SecondLine>
                </PanelHead>
              </Panel>

              <Panel $h={187} $gap={13}>
                <VolPlot />
                <PanelHead>
                  <HeadLine $gap={14}><Chip $w={163} $gap={9}><Fit w={110} size={37}>成交量</Fit><Caret /></Chip><Fit w={166} size={36} weight={500} color="#2f6713">量:35.88万</Fit><Fit w={180} size={36} weight={500}>M5:52.66万</Fit></HeadLine>
                  <SecondLine $gap={17}>
                    <Fit w={199} size={36} weight={500} color="#ee7744">M10:45.45万</Fit>
                    <ValuePair><Fit w={119} size={36} weight={500}>换手率:</Fit><Fit w={93} size={36} weight={500} color="#4aaae6">4.01%</Fit></ValuePair>
                  </SecondLine>
                </PanelHead>
              </Panel>

              <Panel $h={186}>
                <NetPlot />
                <PanelHead>
                  <HeadLine $gap={8}><Chip $w={200} $gap={9}><Fit w={146} size={37}>大单净量</Fit><Caret /></Chip>
                    <HeadLine $gap={16}><Help s={37} c="#b8b8b8" /><Fit w={133} size={36} weight={500} color="#3c9a28">净:−0.30</Fit></HeadLine>
                    <HeadLine $gap={0}><Fit w={151} size={36} weight={500} color="#f07440">MA5:0.01</Fit></HeadLine>
                  </HeadLine>
                  <SecondLine $gap={18}><Fit w={191} size={36} weight={500} color="#4aaae6">MA10:−0.01</Fit><Fit w={192} size={36} weight={500}>MA20:−0.13</Fit></SecondLine>
                </PanelHead>
              </Panel>
            </LeftCol>

            <RightPanel>
              <ProfileBox><Profile /></ProfileBox>
              <Stats>
                <StatRow><Fit w={135} size={34} color="#d9303e">收盘获利</Fit><Fit w={114} size={34} color="#d9303e" round>57.06%</Fit></StatRow>
                <StatRow><Fit w={135} size={34} color="#e5951f">平均成本</Fit><Fit w={63} size={34} color="#e5951f" round>7.34</Fit></StatRow>
                <Segment>
                  <SegItem $on><Fit w={137} size={34} color="#222" round>90%筹码</Fit></SegItem>
                  <SegItem><Fit w={134} size={34} color="#999" round>70%筹码</Fit></SegItem>
                </Segment>
                <StatRow><Fit w={135} size={34} color="#999">价格区间</Fit><Fit w={153} size={34} weight={500} color="#222">6.76 – 8.20</Fit></StatRow>
                <StatRow><Fit w={101} size={34} color="#999">集中度</Fit><Fit w={96} size={34} color="#222" round>9.63%</Fit></StatRow>
                <StatRow $gap={9}><Fit w={202} size={34} color="#999">筹码分布说明</Fit><Help s={28} c="#a0a0a0" /></StatRow>
              </Stats>
              <PanelFoot>
                <FootButton $blue $w={202}>
                  <svg width={33} height={33} viewBox="0 0 33 33" fill="#3f68dc">{[16, 26, 33, 26, 16].map((w, i) => <rect key={i} y={1 + i * 6.8} width={w} height={3.8} rx={0.6} />)}</svg>
                  <Fit w={134} size={34} color="#3f68dc">筹码选股</Fit>
                </FootButton>
                <FootButton $w={98}><Fit w={71} size={35.5} color="#444">关闭</Fit></FootButton>
              </PanelFoot>
            </RightPanel>
          </Columns>

          <Annotation width={1080} height={500} viewBox="0 578 1080 500">
            <polygon points="55,681 958,670 958,689 55,700" fill="#ff7a45" />
            <polygon points="700.5,690 715.3,739 698,735 634.5,983 629,981 680,731 664.3,727" fill="#ff7a45" />
          </Annotation>
        </ChartArea>

        <Divider />

        <NewsTabs>
          <NewsTab $next={33}>
            <svg width={41} height={37} viewBox="0 0 41 37"><defs><linearGradient id="gem" x1="0" y1="0" x2="0" y2="1"><stop offset="0" stopColor="#d2af7c" /><stop offset="1" stopColor="#cba568" /></linearGradient></defs><path d="M9.5,1 H31.5 Q33,1 34,2.5 L40.5,14 Q41,15.5 40,16.5 L22,35.5 Q20.5,37 19,35.5 L1,16.5 Q0,15.5 0.5,14 L7,2.5 Q8,1 9.5,1 Z" fill="url(#gem)" /><rect x={13} y={9.5} width={15} height={3} fill="#fff" /></svg>
          </NewsTab>
          <NewsTab $next={71}><Fit w={203} size={58} weight={700} color="#808080" italic>Level−2</Fit></NewsTab>
          <NewsTab $next={66}><Fit w={89} size={44} color="#666">看点</Fit></NewsTab>
          <NewsTab $next={65} $active><Fit w={101} size={50} weight={700} color="#2a2a2a">资讯</Fit></NewsTab>
          <NewsTab $next={71}><Fit w={89} size={44} color="#666">盘口</Fit></NewsTab>
          <NewsTab $next={72}><Fit w={89} size={44} color="#666">资金</Fit></NewsTab>
          <NewsTab $next={0} $fade><Fit w={89} size={44} color="#666">社区</Fit></NewsTab>
        </NewsTabs>
        <NewsChips>
          <NewsChip $on><Fit w={82} size={41} weight={500} color="#d5303f">新闻</Fit></NewsChip>
          <NewsChip><Fit w={79} size={40} color="#666">公告</Fit></NewsChip>
          <NewsChip><Fit w={80} size={40} color="#666">研报</Fit></NewsChip>
        </NewsChips>

        <BottomBar>
          <BottomItems>
            <Sector>
              <svg width={26} height={15} viewBox="0 0 26 15"><path d="M13,0 L26,15 H0 Z" fill="#aaa" /></svg>
              <Fit w={129} size={32} color="#8f8276">塑料制品</Fit>
              <Fit w={95} size={36} color="#e01818">0.03%</Fit>
            </Sector>
            <BottomItem>
              <svg width={50} height={58} viewBox="0 0 50 58" fill="none" stroke="#ddd" strokeWidth={2.8}><path d="M8,3.5 H42 Q48,3.5 48,9.5 V44 L38,55 H8 Q2,55 2,49 V9.5 Q2,3.5 8,3.5 Z" /><path d="M8.5,17 H42 M8.5,24 H42 M8.5,31 H42 M8.5,38 H32" /></svg>
              <Fit w={64} size={32} color="#d8d8d8">下单</Fit>
            </BottomItem>
            <BottomItem>
              <svg width={58} height={58} viewBox="0 0 58 58" fill="none" stroke="#ddd" strokeWidth={2.8}><rect x={2} y={11} width={54} height={41} rx={6} /><path d="M18,5.5 H40 M29,22 V42 M19.5,32 H38.5 M9.5,54.5 H20.5 M37.5,54.5 H48.5" /></svg>
              <Fit w={64} size={32} color="#d8d8d8">诊股</Fit>
            </BottomItem>
            <BottomItem>
              <svg width={48} height={58} viewBox="0 0 48 58" fill="none" stroke="#ddd" strokeWidth={2.6}><rect x={2} y={7.5} width={44} height={44} /><path d="M12,29 H36" /></svg>
              <Fit w={97} size={32} color="#d8d8d8">删自选</Fit>
            </BottomItem>
            <BottomItem>
              <svg width={52} height={58} viewBox="0 0 52 58" fill="none" stroke="#ddd" strokeWidth={2.8}><circle cx="26" cy="29.5" r="23.5" /><path d="M15,22.5 H37 M15,36 H37" /></svg>
              <Fit w={64} size={32} color="#d8d8d8">功能</Fit>
            </BottomItem>
          </BottomItems>
          <HomeBar />
        </BottomBar>
      </Page>
    </>
  );
}
